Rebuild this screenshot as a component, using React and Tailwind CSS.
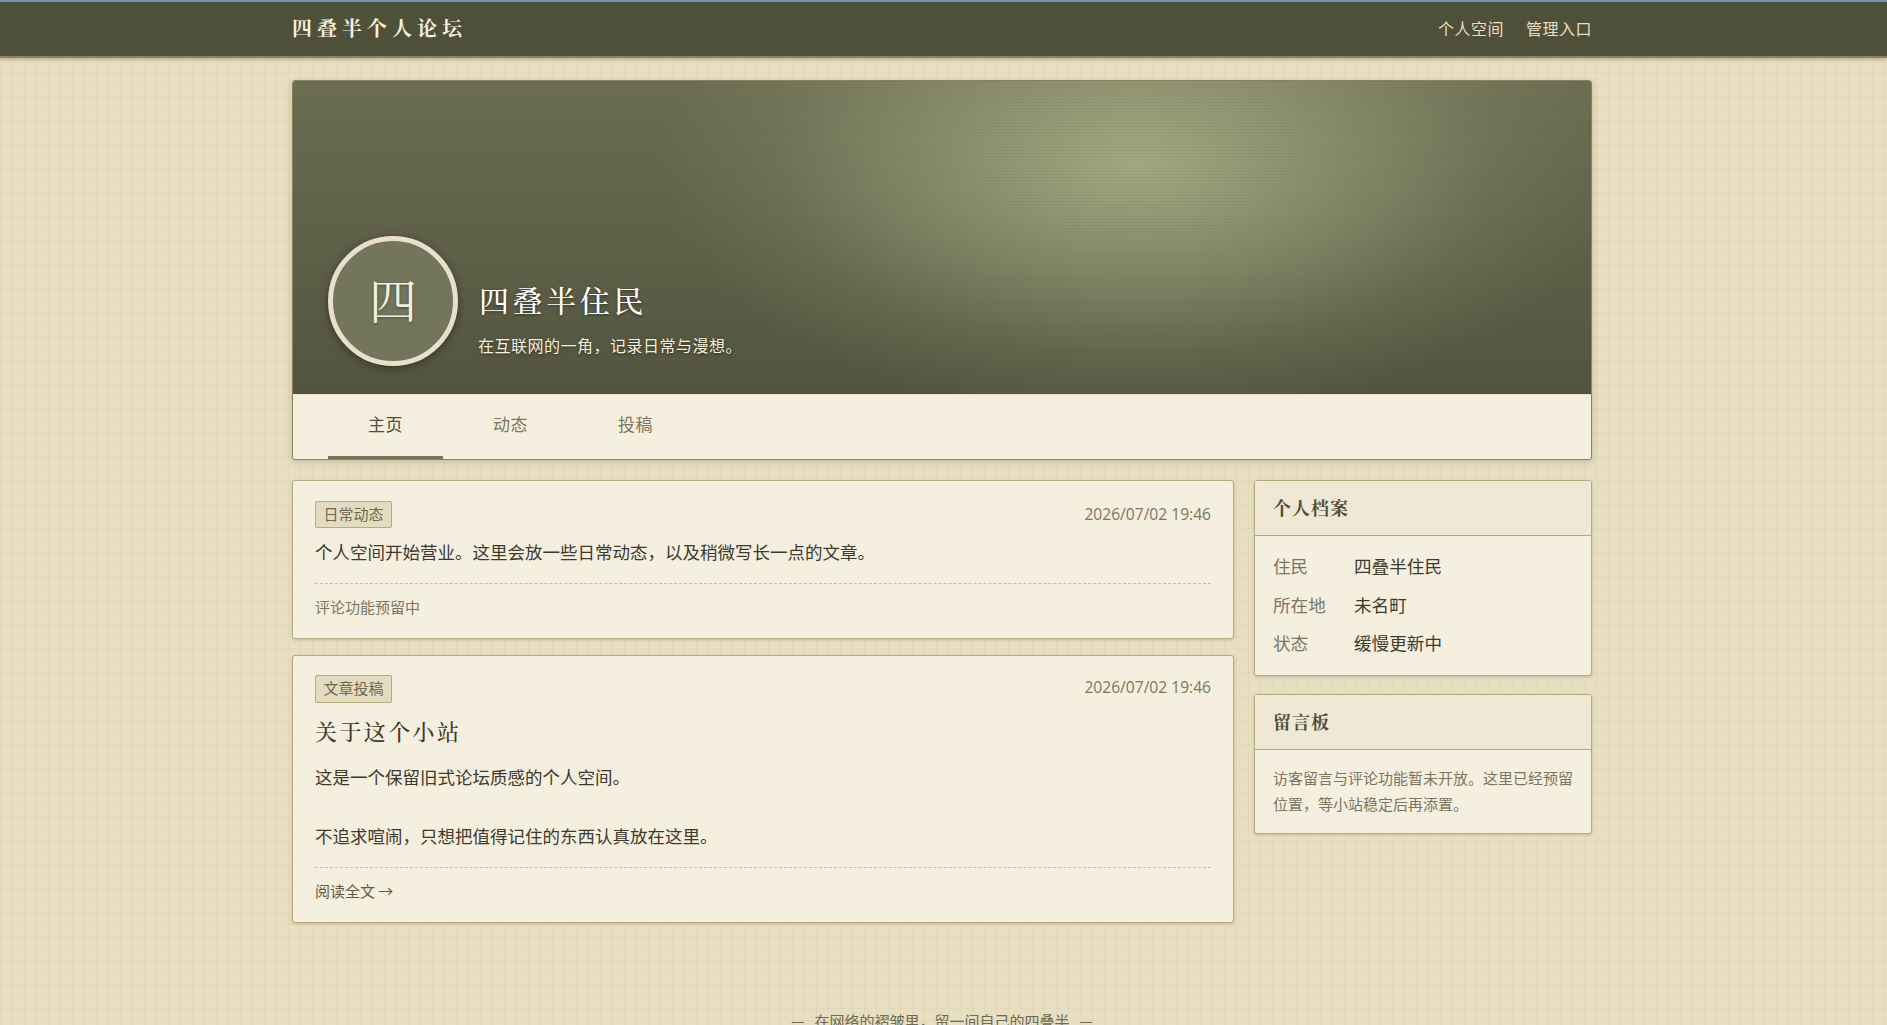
import React from "react";

const sans = "font-['Microsoft_YaHei','Noto_Sans_CJK_SC','Noto_Sans',sans-serif]";
const serif = "font-['Noto_Serif_CJK_SC','Liberation_Serif','Noto_Sans_CJK_SC',serif]";

// ─── Sidebar panel ────────────────────────────────────────────────────────────
function Panel({ title, children }) {
  return (
    <div className="bg-[#f5efdf] border border-[#b8a97f] rounded-[3px] shadow-[0_1px_3px_rgba(90,80,50,0.25)]">
      <h3 className={`${serif} h-[55px] leading-[53px] px-[18px] bg-[#eee8d5] border-b border-[#b8a97f] text-[18px] font-bold tracking-[1px] text-[#4f5039]`}>
        {title}
      </h3>
      {children}
    </div>
  );
}

// ─── Post card ────────────────────────────────────────────────────────────────
function Post({ tag, tall, children }) {
  return (
    <article className={`bg-[#f5efdf] border border-[#b8a97f] rounded-[3px] px-[22px] shadow-[0_1px_3px_rgba(90,80,50,0.25)] ${tall ? "pt-[19px]" : "pt-[20px]"}`}>
      <div className="flex justify-between items-start">
        <span className={`px-[7.5px] text-[15px] bg-[#e4dcc0] border border-[#b8a97f] rounded-[2px] text-[#6f6a4f] ${tall ? "h-[28px] leading-[24px]" : "h-[27px] leading-[24px]"}`}>{tag}</span>
        <span className={`font-['Open_Sans',sans-serif] text-[15.6px] leading-[26px] text-[#7d7560] ${tall ? "-mt-[1px]" : ""}`}>2026/07/02 19:46</span>
      </div>
      {children}
    </article>
  );
}

export default function App() {
  const rows = [
    { label: "住民", value: "四叠半住民" },
    { label: "所在地", value: "未名町" },
    { label: "状态", value: "缓慢更新中" },
  ];

  return (
    <div className={`${sans} h-screen overflow-hidden bg-[#e8dec2] bg-[linear-gradient(rgba(160,140,90,0.08)_1px,transparent_1px),linear-gradient(90deg,rgba(160,140,90,0.08)_1px,transparent_1px)] bg-[size:12px_12px]`}>
      {/* Top bar */}
      <header className="h-[58px] bg-[#4f5039] border-t-2 border-t-[#6f97a8] border-b-2 border-b-[#8a8360] shadow-[0_1px_4px_rgba(60,50,30,0.35)]">
        <div className="w-[1300px] ml-[292px] h-full flex items-center justify-between">
          <a className={`${serif} -mt-[2px] text-[20px] font-bold tracking-[5px] text-[#f5efdf]`}>四叠半个人论坛</a>
          <nav className="-mt-[2px] flex gap-[22px] text-[16px] tracking-[0.5px] text-[#e8dec2]">
            <a>个人空间</a>
            <a>管理入口</a>
          </nav>
        </div>
      </header>

      <div className="w-[1300px] ml-[292px]">
        {/* Profile */}
        <section className="mt-[22px] bg-[#f5efdf] border border-[#8a8360] rounded-[3px] shadow-[0_2px_6px_rgba(90,80,50,0.25)] overflow-hidden">
          <div className="h-[313px] px-[35px] pb-[28px] flex items-end gap-[21px] bg-[repeating-linear-gradient(0deg,rgba(0,0,0,0.03)_0px,rgba(0,0,0,0.03)_1px,transparent_1px,transparent_3px),radial-gradient(ellipse_480px_260px_at_65%_26%,rgba(170,175,135,0.9)_0%,rgba(170,175,135,0.5)_40%,rgba(170,175,135,0.15)_75%,transparent_100%),linear-gradient(180deg,#6b6e52,#54553f)]">
            <div className={`${serif} w-[130px] h-[130px] shrink-0 rounded-full border-[5px] border-[#e8e0cc] bg-[#74765c] flex items-center justify-center pb-[4px] text-[48px] text-[#f5efdf] shadow-[0_2px_8px_rgba(0,0,0,0.4)] [text-shadow:0_1px_3px_rgba(0,0,0,0.4)]`}>四</div>
            <div className="pb-[9px] [text-shadow:0_1px_3px_rgba(0,0,0,0.5)]">
              <h1 className={`${serif} text-[30px] leading-[40px] font-medium tracking-[3.6px] text-white`}>四叠半住民</h1>
              <p className="-ml-[1px] mt-[14px] text-[16px] leading-[24px] tracking-[0.5px] text-[#f5efdf]">在互联网的一角，记录日常与漫想。</p>
            </div>
          </div>
          <nav className="h-[65px] border-t border-[#e8e0cc] px-[35px] flex gap-[10px] text-[17px] tracking-[0.5px]">
            <a className="w-[115px] text-center leading-[58px] border-b-[3px] border-[#74765c] text-[#4f5039]">主页</a>
            <a className="w-[115px] text-center leading-[58px] text-[#7d7560]">动态</a>
            <a className="w-[115px] text-center leading-[58px] text-[#7d7560]">投稿</a>
          </nav>
        </section>

        <div className="mt-[20px] grid grid-cols-[942px_338px] gap-[20px] items-start">
          <main className="flex flex-col gap-[16px]">
            <Post tag="日常动态">
              <p className="mt-[9px] text-[17.5px] leading-[30px] text-[#3e3a2c]">个人空间开始营业。这里会放一些日常动态，以及稍微写长一点的文章。</p>
              <div className="mt-[16px] border-t border-dashed border-[#c9bd9b] pt-[11px] pb-[19px] text-[15px] leading-[24px] text-[#7d7560]">评论功能预留中</div>
            </Post>
            <Post tag="文章投稿" tall>
              <h2 className={`${serif} mt-[10px] text-[22px] leading-[36px] font-medium tracking-[2.4px] text-[#3e3a2c]`}>关于这个小站</h2>
              <p className="mt-[13px] text-[17.5px] leading-[30px] text-[#3e3a2c]">这是一个保留旧式论坛质感的个人空间。</p>
              <p className="mt-[29px] text-[17.5px] leading-[30px] text-[#3e3a2c]">不追求喧闹，只想把值得记住的东西认真放在这里。</p>
              <div className="mt-[16px] border-t border-dashed border-[#c9bd9b] pt-[11px] pb-[19px] text-[15px] leading-[24px] text-[#5f5a42]">阅读全文 →</div>
            </Post>
          </main>

          <aside className="flex flex-col gap-[18px]">
            <Panel title="个人档案">
              <div className="px-[18px] pt-[11px] pb-[12px] text-[17.6px]">
                {rows.map((r) => (
                  <div key={r.label} className="flex h-[38.5px] items-center">
                    <span className="w-[81px] text-[#7d7560]">{r.label}</span>
                    <span className="text-[#3e3a2c]">{r.value}</span>
                  </div>
                ))}
              </div>
            </Panel>
            <Panel title="留言板">
              <p className="px-[18px] pt-[15px] pb-[15px] text-[15px] leading-[26.5px] text-[#7d7560]">访客留言与评论功能暂未开放。这里已经预留位置，等小站稳定后再添置。</p>
            </Panel>
          </aside>
        </div>

        <footer className="mt-[86px] text-center text-[15px] leading-[24px] text-[#6f6a55]">{"—\u00A0\u00A0\u00A0在网络的褶皱里，留一间自己的四叠半\u00A0\u00A0\u00A0—"}</footer>
      </div>
    </div>
  );
}
